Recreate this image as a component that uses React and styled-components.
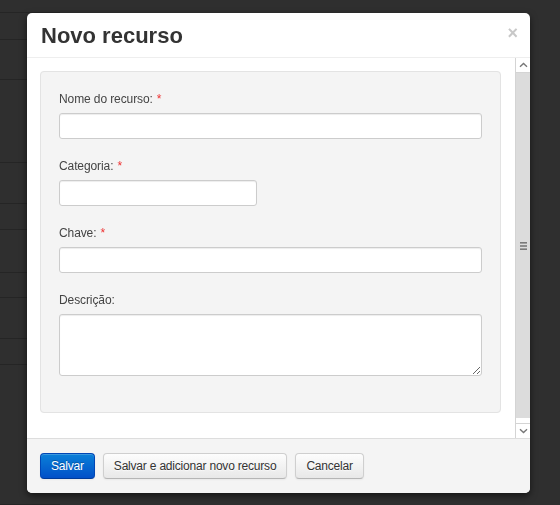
import React from 'react';
import styled, { createGlobalStyle } from 'styled-components';

const GlobalStyle = createGlobalStyle`
  html, body {
    margin: 0;
    padding: 0;
    background: #2f2f2f;
    font-family: "Liberation Sans", Arial, sans-serif;
    overflow: hidden;
  }
`;

const Backdrop = styled.div`
  width: 560px;
  height: 505px;
  background: #2f2f2f;
  display: flex;
  flex-direction: column;
`;

const BackRow = styled.div`
  height: ${(p) => p.$h}px;
  flex-shrink: 0;
  width: 60px;
  border-bottom: 1px solid #252525;
  box-sizing: border-box;
`;

const Modal = styled.div`
  position: fixed;
  left: 27px;
  top: 13px;
  width: 503px;
  height: 480px;
  background: #fff;
  border-radius: 5px;
  box-shadow: 0 3px 7px rgba(0, 0, 0, 0.55);
  display: flex;
  flex-direction: column;
  overflow: hidden;
`;

const Header = styled.div`
  height: 45px;
  box-sizing: border-box;
  border-bottom: 1px solid #eee;
  padding: 0 14px;
  display: flex;
  align-items: center;
  justify-content: space-between;
`;

const Title = styled.h3`
  margin: 0;
  font-size: 22px;
  font-weight: bold;
  color: #333;
  line-height: 26px;
  padding-top: 1px;
`;

const Close = styled.button`
  border: none;
  background: none;
  padding: 0;
  font-family: "Liberation Sans", Arial, sans-serif;
  font-size: 18px;
  font-weight: bold;
  color: #c8c8c8;
  line-height: 18px;
  margin-right: -2px;
  margin-top: -5px;
  cursor: pointer;
`;

const Body = styled.div`
  height: 380px;
  display: flex;
`;

const Content = styled.div`
  flex: 1;
  padding: 13px 14px 0 13px;
  overflow: hidden;
`;

const Well = styled.fieldset`
  margin: 0;
  border: 1px solid #e3e3e3;
  border-radius: 4px;
  background: #f4f4f4;
  padding: 18px 18px 18px;
`;

const Group = styled.div`
  margin-bottom: 18px;
`;

const Label = styled.label`
  display: block;
  font-size: 12px;
  line-height: 18px;
  color: #444;
  margin-bottom: 5px;
  letter-spacing: -0.1px;
`;

const Req = styled.span`
  color: #e33;
  margin-left: 4px;
`;

const Input = styled.input`
  display: block;
  box-sizing: border-box;
  width: ${(p) => p.$w || 423}px;
  height: 26px;
  border: 1px solid #ccc;
  border-radius: 3px;
  background: #fff;
  box-shadow: inset 0 1px 1px rgba(0, 0, 0, 0.075);
  padding: 4px 6px;
  font-family: inherit;
  font-size: 12px;
  outline: none;
`;

const TextArea = styled.textarea`
  display: block;
  box-sizing: border-box;
  width: 423px;
  height: 62px;
  border: 1px solid #ccc;
  border-radius: 3px;
  background: #fff;
  box-shadow: inset 0 1px 1px rgba(0, 0, 0, 0.075);
  padding: 4px 6px;
  font-family: inherit;
  font-size: 12px;
  outline: none;
`;

const Scrollbar = styled.div`
  width: 14px;
  flex-shrink: 0;
  border-left: 1px solid #d4d4d4;
  display: flex;
  flex-direction: column;
  background: #fff;
`;

const ArrowBox = styled.div`
  height: 14px;
  flex-shrink: 0;
  display: flex;
  align-items: center;
  justify-content: center;
  border-top: ${(p) => (p.$down ? '1px solid #d4d4d4' : 'none')};
  border-bottom: ${(p) => (p.$down ? 'none' : '1px solid #d4d4d4')};
`;

const Track = styled.div`
  flex: 1;
  display: flex;
  padding-bottom: 5px;
`;

const Thumb = styled.div`
  flex: 1;
  background: #dcdcdc;
  display: flex;
  align-items: center;
  justify-content: center;
`;

const Footer = styled.div`
  flex: 1;
  background: #f4f4f4;
  border-top: 1px solid #ddd;
  padding: 14px 13px;
  display: flex;
  align-items: flex-start;
  gap: 8px;
`;

const Button = styled.button`
  height: 26px;
  padding: 0 10px;
  border-radius: 4px;
  font-family: "Liberation Sans", Arial, sans-serif;
  font-size: 12px;
  letter-spacing: -0.2px;
  cursor: pointer;
  border: 1px solid ${(p) => (p.$primary ? '#0046b5' : '#cfcfcf')};
  border-bottom-color: ${(p) => (p.$primary ? '#003a99' : '#b5b5b5')};
  color: ${(p) => (p.$primary ? '#fff' : '#333')};
  text-shadow: ${(p) => (p.$primary ? '0 -1px 0 rgba(0,0,0,0.25)' : '0 1px 1px rgba(255,255,255,0.75)')};
  background: ${(p) =>
    p.$primary
      ? 'linear-gradient(to bottom, #0a80d8, #0250c8)'
      : 'linear-gradient(to bottom, #fdfdfd, #e8e8e8)'};
  box-shadow: inset 0 1px 0 rgba(255, 255, 255, 0.2), 0 1px 2px rgba(0, 0, 0, 0.05);
`;

const rows = [13, 27, 40, 83, 41, 26, 43, 25, 41, 26, 140];

const Chevron = ({ down }) => (
  <svg width="9" height="6" viewBox="0 0 9 6">
    <path
      d={down ? 'M1 1.2 L4.5 4.6 L8 1.2' : 'M1 4.8 L4.5 1.4 L8 4.8'}
      fill="none"
      stroke="#777"
      strokeWidth="1.4"
    />
  </svg>
);

const Grip = () => (
  <svg width="7" height="8" viewBox="0 0 7 8">
    <rect x="0" y="0" width="7" height="1.6" fill="#7a7a7a" />
    <rect x="0" y="3.2" width="7" height="1.6" fill="#7a7a7a" />
    <rect x="0" y="6.4" width="7" height="1.6" fill="#7a7a7a" />
  </svg>
);

const App = () => (
  <>
    <GlobalStyle />
    <Backdrop>
      {rows.map((h, i) => (
        <BackRow key={i} $h={h} />
      ))}
    </Backdrop>
    <Modal>
      <Header>
        <Title>Novo recurso</Title>
        <Close>×</Close>
      </Header>
      <Body>
        <Content>
          <Well>
            <Group>
              <Label>
                Nome do recurso:<Req>*</Req>
              </Label>
              <Input type="text" />
            </Group>
            <Group>
              <Label>
                Categoria:<Req>*</Req>
              </Label>
              <Input type="text" $w={198} />
            </Group>
            <Group>
              <Label>
                Chave:<Req>*</Req>
              </Label>
              <Input type="text" />
            </Group>
            <Group>
              <Label>Descrição:</Label>
              <TextArea />
            </Group>
          </Well>
        </Content>
        <Scrollbar>
          <ArrowBox>
            <Chevron />
          </ArrowBox>
          <Track>
            <Thumb>
              <Grip />
            </Thumb>
          </Track>
          <ArrowBox $down>
            <Chevron down />
          </ArrowBox>
        </Scrollbar>
      </Body>
      <Footer>
        <Button $primary>Salvar</Button>
        <Button>Salvar e adicionar novo recurso</Button>
        <Button>Cancelar</Button>
      </Footer>
    </Modal>
  </>
);

export default App;
